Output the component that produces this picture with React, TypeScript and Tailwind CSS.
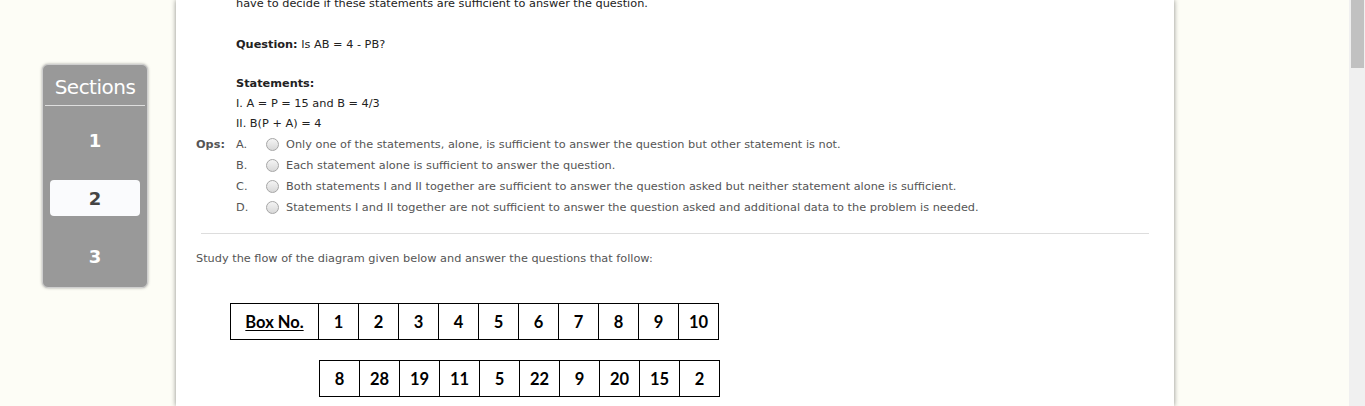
const options = [
  { key: 'A.', text: 'Only one of the statements, alone, is sufficient to answer the question but other statement is not.' },
  { key: 'B.', text: 'Each statement alone is sufficient to answer the question.' },
  { key: 'C.', text: 'Both statements I and II together are sufficient to answer the question asked but neither statement alone is sufficient.' },
  { key: 'D.', text: 'Statements I and II together are not sufficient to answer the question asked and additional data to the problem is needed.' },
];

const boxNumbers = ['1', '2', '3', '4', '5', '6', '7', '8', '9', '10'];
const boxValues = ['8', '28', '19', '11', '5', '22', '9', '20', '15', '2'];

function Radio() {
  return (
    <span className="inline-block w-[13px] h-[13px] rounded-full border border-[#a6a6a6] bg-linear-to-b from-[#f4f4f4] to-[#d8d8d8]" />
  );
}

function Sidebar() {
  const items = ['1', '2', '3'];
  return (
    <div className="mt-[64px] w-[106px] h-[224px] rounded-[6px] border border-[#cfcfcf] bg-[#999999] shadow-[0_0_3px_rgba(0,0,0,0.35)] flex flex-col">
      <div className="pt-[10px] pb-[6px] text-center text-[20px] leading-[24px] text-white tracking-[-0.5px]">Sections</div>
      <div className="mx-[2px] h-px bg-[#dedede]" />
      <div className="mt-[16px] flex flex-col gap-[22px]">
        {items.map((n) => (
          <div
            key={n}
            className={
              n === '2'
                ? 'mx-[7px] h-[36px] rounded-[4px] bg-[#fafbfd] flex items-center justify-center text-[18px] font-bold text-[#444444]'
                : 'mx-[7px] h-[36px] flex items-center justify-center text-[18px] font-bold text-white'
            }
          >
            {n}
          </div>
        ))}
      </div>
    </div>
  );
}

export default function App() {
  return (
    <div className="h-[406px] w-[1365px] overflow-hidden flex bg-[#fdfdf6] font-['DejaVu_Sans',sans-serif] text-[11.3px]">
      <div className="flex-1 flex">
        <div className="pl-[42px]">
          <Sidebar />
        </div>
        <div className="ml-[28px] w-[998px] h-full bg-white shadow-[0_0_5px_rgba(0,0,0,0.45)] px-[20px] leading-[20px]">
          <div className="pl-[40px] text-[#222222]">
            <p className="mt-[-6px]">have to decide if these statements are sufficient to answer the question.</p>
            <p className="mt-[21px]">
              <b>Question:</b> Is AB = 4 - PB?
            </p>
            <p className="mt-[19px] font-bold">Statements:</p>
            <p>I. A = P = 15 and B = 4/3</p>
            <p>II. B(P + A) = 4</p>
          </div>
          <div className="flex text-[#555555]">
            <div className="w-[40px] font-bold leading-[21px]">Ops:</div>
            <div className="flex flex-col">
              {options.map((o) => (
                <div key={o.key} className="h-[21px] flex items-center">
                  <span className="w-[30px]">{o.key}</span>
                  <Radio />
                  <span className="ml-[7px]">{o.text}</span>
                </div>
              ))}
            </div>
          </div>
          <div className="mt-[15px] mx-[5px] h-px bg-[#dddddd]" />
          <p className="mt-[15px] text-[#555555]">Study the flow of the diagram given below and answer the questions that follow:</p>
          <div className="mt-[34px] ml-[34px] font-['Lato',sans-serif] text-[16.5px] font-bold text-black">
            <div className="flex w-fit border-l border-t border-black">
              <div className="w-[88px] h-[36px] border-r border-b border-black flex items-center justify-center">
                <span className="underline underline-offset-2">Box No.</span>
              </div>
              {boxNumbers.map((n) => (
                <div key={n} className="w-[40px] h-[36px] border-r border-b border-black flex items-center justify-center">
                  {n}
                </div>
              ))}
            </div>
            <div className="mt-[20px] ml-[89px] flex w-fit border-l border-t border-black">
              {boxValues.map((n, i) => (
                <div key={i} className="w-[40px] h-[36px] border-r border-b border-black flex items-center justify-center">
                  {n}
                </div>
              ))}
            </div>
          </div>
        </div>
      </div>
      <div className="w-[16px] h-full bg-[#f0f0f0] flex justify-center">
        <div className="w-[13px] h-[68px] bg-[#c1c1c1]" />
      </div>
    </div>
  );
}
